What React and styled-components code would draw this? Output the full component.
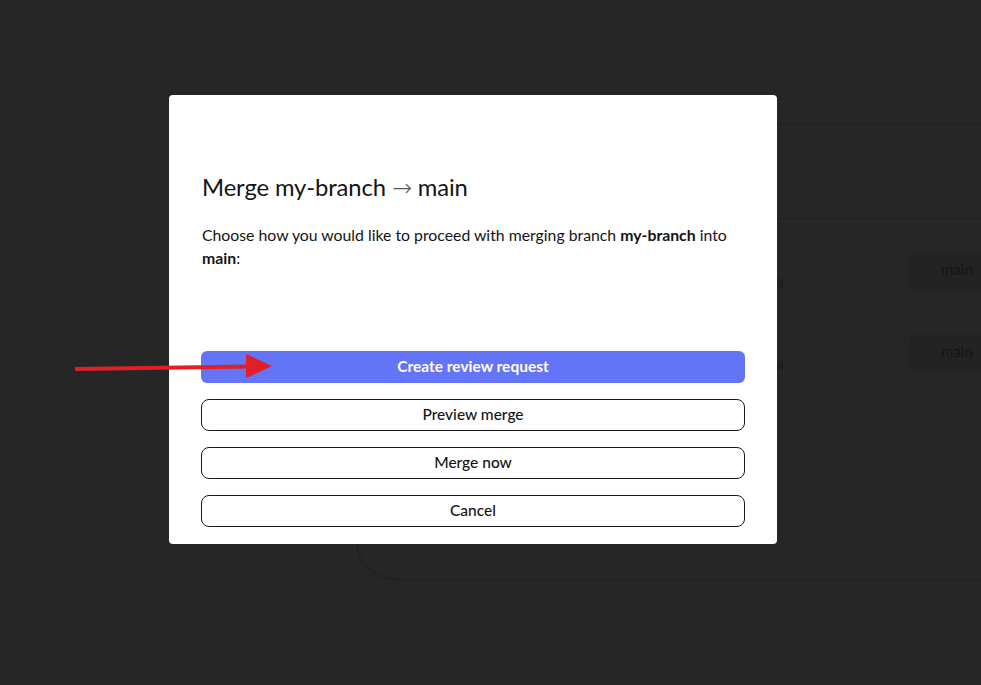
import React from 'react';
import styled, { createGlobalStyle } from 'styled-components';

const GlobalStyle = createGlobalStyle`
    html, body {
        margin: 0;
        padding: 0;
        background: #262626;
        overflow: hidden;
        font-family: Lato, "Noto Sans", "DejaVu Sans", sans-serif;
    }
`

const actions = [
    { key: 'review', label: 'Create review request', primary: true },
    { key: 'preview', label: 'Preview merge' },
    { key: 'merge', label: 'Merge now' },
    { key: 'cancel', label: 'Cancel' },
];

const branches = [
    { key: 'r1', target: 'main' },
    { key: 'r2', target: 'main' },
];

const App = () => {
    return (
        <>
            <GlobalStyle />
            <Page>
                <BackCard>
                    <CardHead />
                    <CardBody>
                        {branches.map(b => (
                            <BranchRow key={b.key}>
                                <RowLabel>Pull</RowLabel>
                                <Chip>{b.target}</Chip>
                            </BranchRow>
                        ))}
                    </CardBody>
                </BackCard>
            </Page>
            <Overlay>
                <Modal>
                    <Title>Merge my-branch <Arrow>→</Arrow> main</Title>
                    <Text>
                        Choose how you would like to proceed with merging branch <b>my-branch</b> into <b>main</b>:
                    </Text>
                    <Actions>
                        {actions.map(a => (
                            <Button key={a.key} primary={a.primary}>{a.label}</Button>
                        ))}
                    </Actions>
                </Modal>
                <Pointer width="280" height="40" viewBox="0 0 280 40">
                    <line x1="75" y1="20" x2="250" y2="17.5" stroke="#e21f26" strokeWidth="4" />
                    <polygon points="246,5 272,17 246,29" fill="#e21f26" />
                </Pointer>
            </Overlay>
        </>
    )
}

const Page = styled.div`
    width: 100vw;
    height: 100vh;
    box-sizing: border-box;
    padding: 123px 0 0 356px;
    overflow: hidden;
`

const BackCard = styled.div`
    width: 760px;
    height: 457px;
    box-sizing: border-box;
    border: 1px solid #1f1f1f;
    border-right: none;
    border-radius: 40px 0 0 40px;
    display: flex;
    flex-direction: column;
`

const CardHead = styled.div`
    height: 94px;
    border-bottom: 1px solid #1f1f1f;
`

const CardBody = styled.div`
    display: flex;
    flex-direction: column;
    gap: 42px;
    padding: 33px 0 0 0;
`

const BranchRow = styled.div`
    display: flex;
    align-items: flex-start;
    height: 40px;
`

const RowLabel = styled.span`
    width: 556px;
    box-sizing: border-box;
    margin: 24px 0 0 -4px;
    padding-left: 411px;
    font-size: 12px;
    color: #161616;
`

const Chip = styled.div`
    height: 40px;
    width: 120px;
    box-sizing: border-box;
    padding: 8px 0 0 32px;
    background: #232323;
    border-radius: 8px;
    font-size: 15px;
    color: #141414;
`

const Overlay = styled.div`
    position: fixed;
    inset: 0;
    display: flex;
    align-items: flex-start;
    padding: 95px 0 0 169px;
`

const Modal = styled.div`
    width: 608px;
    height: 449px;
    box-sizing: border-box;
    padding: 0 32px 0 32px;
    background: #ffffff;
    border-radius: 4px;
    display: flex;
    flex-direction: column;
    color: #151515;
`

const Title = styled.h2`
    margin: 77px 0 0 1px;
    font-size: 23.8px;
    line-height: 30px;
    font-weight: 400;
    letter-spacing: -0.1px;
`

const Arrow = styled.span`
    color: #555;
    font-family: "DejaVu Sans", sans-serif;
    font-weight: 300;
`

const Text = styled.p`
    margin: 20px 0 0 1px;
    font-size: 15.8px;
    line-height: 23px;
    b {
        font-weight: 700;
    }
`

const Actions = styled.div`
    margin-top: 82px;
    display: flex;
    flex-direction: column;
    gap: 16px;
`

const Button = styled.button`
    height: 32px;
    width: 100%;
    box-sizing: border-box;
    padding: 0 0 3px 0;
    border-radius: ${p => p.primary ? '6px' : '8px'};
    border: ${p => p.primary ? 'none' : '1px solid #1a1a1a'};
    background: ${p => p.primary ? '#6474f6' : '#ffffff'};
    color: ${p => p.primary ? '#ffffff' : '#151515'};
    font-family: Lato, "Noto Sans", sans-serif;
    font-size: 15.5px;
    font-weight: ${p => p.primary ? 700 : 500};
    cursor: pointer;
`

const Pointer = styled.svg`
    position: absolute;
    left: 0;
    top: 349px;
`

export default App;
